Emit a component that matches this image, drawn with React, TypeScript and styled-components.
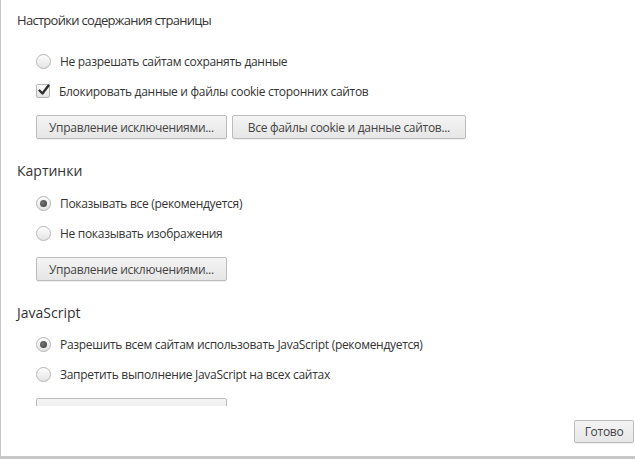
import styled, { createGlobalStyle } from "styled-components";

const GlobalStyle = createGlobalStyle`
  html, body {
    margin: 0;
    padding: 0;
    background: #ffffff;
    overflow: hidden;
  }
  body {
    font-family: "Open Sans", "Noto Sans", "Liberation Sans", sans-serif;
    color: #333333;
  }
`;

const Dialog = styled.div`
  width: 634px;
  height: 456px;
  background: #ffffff;
  border-left: 1px solid #c9c9c9;
  border-bottom: 3px solid #c8c8c8;
  display: flex;
  flex-direction: column;
`;

const ScrollArea = styled.div`
  height: 406px;
  overflow: hidden;
  padding-left: 16px;
`;

const Title = styled.h1`
  margin: 10px 0 0;
  font-size: 13px;
  font-weight: 400;
  line-height: 20px;
  letter-spacing: -0.7px;
  color: #333333;
`;

const SectionTitle = styled.h2`
  margin: 22px 0 0;
  font-size: 14px;
  font-weight: 400;
  line-height: 20px;
  color: #333333;
`;

const Options = styled.div<{ $top: number }>`
  margin-top: ${(p) => p.$top}px;
  padding-left: 19px;
  display: flex;
  flex-direction: column;
`;

const Option = styled.label`
  height: 30px;
  display: flex;
  align-items: center;
  gap: 9px;
  font-size: 12px;
  letter-spacing: -0.3px;
  color: #333333;
`;

const Radio = styled.span<{ $checked?: boolean }>`
  position: relative;
  width: 13px;
  height: 13px;
  border-radius: 50%;
  border: 1px solid #b4b4b4;
  background: linear-gradient(#fdfdfd, #e4e4e4);
  box-shadow: inset 0 1px 1px rgba(255, 255, 255, 0.9);
  flex-shrink: 0;

  &::after {
    content: "";
    display: ${(p) => (p.$checked ? "block" : "none")};
    position: absolute;
    left: 3px;
    top: 3px;
    width: 7px;
    height: 7px;
    border-radius: 50%;
    background: radial-gradient(circle at 40% 40%, #777, #3a3a3a);
  }
`;

const Checkbox = styled.span`
  position: relative;
  width: 12px;
  height: 12px;
  border-radius: 2px;
  border: 1px solid #b4b4b4;
  background: linear-gradient(#fdfdfd, #e4e4e4);
  flex-shrink: 0;

  svg {
    position: absolute;
    left: 0px;
    top: -2px;
  }
`;

const ButtonRow = styled.div`
  margin-top: 9px;
  display: flex;
  gap: 5px;
`;

const Button = styled.button<{ $pad?: number }>`
  height: 24px;
  padding: 0 ${(p) => p.$pad ?? 12}px;
  font-family: inherit;
  font-size: 12px;
  letter-spacing: -0.3px;
  color: #444444;
  border: 1px solid #bcbcbc;
  border-radius: 2px;
  background: linear-gradient(#f4f4f4, #e6e6e6);
  box-shadow: 0 1px 0 rgba(0, 0, 0, 0.06);
  white-space: nowrap;
`;

const Footer = styled.div`
  flex: 1;
  display: flex;
  justify-content: flex-end;
  align-items: flex-start;
  padding: 14px 1px 0 0;
`;

const DoneButton = styled(Button)`
  width: 60px;
  height: 23px;
  padding: 0;
`;

function CheckMark() {
  return (
    <svg width="14" height="14" viewBox="0 0 14 14">
      <path
        d="M2.5 7.5 L5.5 10.5 L11.5 2.5"
        fill="none"
        stroke="#2f2f2f"
        strokeWidth="2.4"
        strokeLinecap="round"
        strokeLinejoin="round"
      />
    </svg>
  );
}

export default function App() {
  return (
    <>
      <GlobalStyle />
      <Dialog>
        <ScrollArea>
          <Title>Настройки содержания страницы</Title>
          <Options $top={16}>
            <Option>
              <Radio />
              Не разрешать сайтам сохранять данные
            </Option>
            <Option>
              <Checkbox>
                <CheckMark />
              </Checkbox>
              Блокировать данные и файлы cookie сторонних сайтов
            </Option>
            <ButtonRow>
              <Button>Управление исключениями...</Button>
              <Button $pad={15}>Все файлы cookie и данные сайтов...</Button>
            </ButtonRow>
          </Options>

          <SectionTitle>Картинки</SectionTitle>
          <Options $top={7}>
            <Option>
              <Radio $checked />
              Показывать все (рекомендуется)
            </Option>
            <Option>
              <Radio />
              Не показывать изображения
            </Option>
            <ButtonRow>
              <Button>Управление исключениями...</Button>
            </ButtonRow>
          </Options>

          <SectionTitle>JavaScript</SectionTitle>
          <Options $top={6}>
            <Option>
              <Radio $checked />
              Разрешить всем сайтам использовать JavaScript (рекомендуется)
            </Option>
            <Option>
              <Radio />
              Запретить выполнение JavaScript на всех сайтах
            </Option>
            <ButtonRow>
              <Button>Управление исключениями...</Button>
            </ButtonRow>
          </Options>
        </ScrollArea>
        <Footer>
          <DoneButton>Готово</DoneButton>
        </Footer>
      </Dialog>
    </>
  );
}
